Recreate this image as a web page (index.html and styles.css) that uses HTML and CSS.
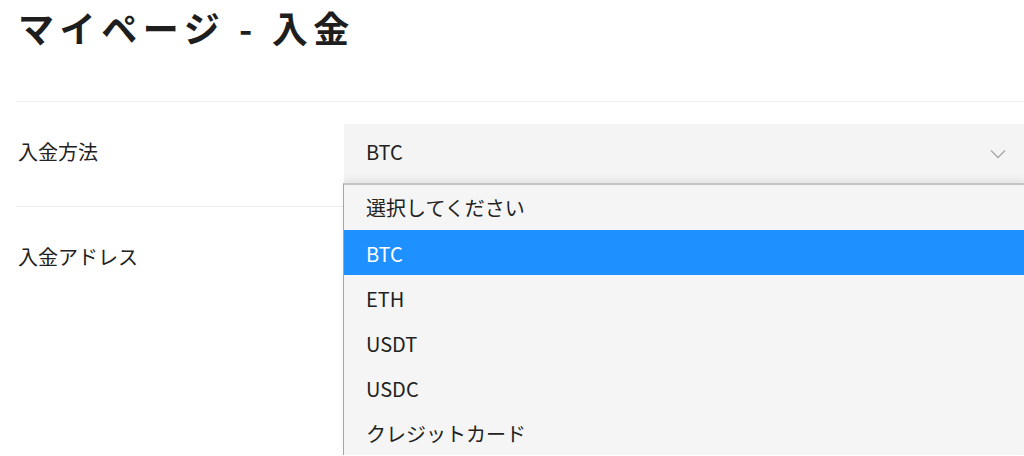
FILE: index.html
```html
<!DOCTYPE html>
<html lang="ja">
<head>
    <meta charset="UTF-8">
    <meta name="viewport" content="width=device-width, initial-scale=1.0">
    <title>マイページ - 入金</title>
    <link rel="stylesheet" href="styles.css">
</head>
<body>
    <div class="page">
        <h1>マイページ - 入金</h1>
        <div class="form">
            <div class="form-row">
                <div class="form-label">入金方法</div>
                <div class="form-field">
                    <div class="select">
                        <span>BTC</span>
                        <svg class="chevron" width="16" height="10" viewBox="0 0 16 10">
                            <polyline points="1,1.5 8,8.5 15,1.5" fill="none" stroke="#a8a8a8" stroke-width="1.3"/>
                        </svg>
                    </div>
                    <ul class="dropdown">
                        <li>選択してください</li>
                        <li class="selected">BTC</li>
                        <li>ETH</li>
                        <li>USDT</li>
                        <li>USDC</li>
                        <li>クレジットカード</li>
                    </ul>
                </div>
            </div>
            <div class="form-row">
                <div class="form-label">入金アドレス</div>
                <div class="form-field"></div>
            </div>
        </div>
    </div>
</body>
</html>
```

FILE: styles.css
```css
body {
    margin: 0;
    background-color: #ffffff;
    font-family: "Noto Sans CJK JP", "Noto Sans", sans-serif;
    color: #222222;
}
.page {
    height: 456px;
    padding-left: 16px;
    overflow: hidden;
}
h1 {
    margin: 0;
    padding: 5px 0 0 2px;
    height: 96px;
    font-size: 36px;
    line-height: 44px;
    font-weight: 700;
    letter-spacing: 5.6px;
    color: #1e1e1e;
    border-bottom: 1px solid #f0f0f0;
}
.form-row {
    display: flex;
    border-bottom: 1px solid #ececec;
}
.form-row:last-child {
    border-bottom: none;
}
.form-label {
    width: 326px;
    padding: 20px 0 24px 2px;
    font-size: 20px;
    line-height: 60px;
}
.form-field {
    flex: 1;
    position: relative;
    padding: 22px 0;
}
.select {
    display: flex;
    justify-content: space-between;
    align-items: center;
    height: 60px;
    padding: 0 18px 5px 22px;
    box-sizing: border-box;
    background-color: #f4f4f4;
    font-size: 20px;
}
.chevron {
    margin-top: 5px;
}
.dropdown {
    position: absolute;
    top: 81px;
    left: -1px;
    right: 0;
    margin: 0;
    padding: 0;
    list-style: none;
    background-color: #f5f5f5;
    border-top: 2px solid #c4c4c4;
    border-left: 1px solid #a6a6a6;
    box-shadow: 0 -4px 6px rgba(0, 0, 0, 0.06);
}
.dropdown li {
    height: 45px;
    line-height: 47px;
    padding-left: 22px;
    font-size: 20px;
    color: #222222;
}
.dropdown li:first-child {
    line-height: 45px;
}
.dropdown li.selected {
    background-color: #1e90ff;
    color: #ffffff;
}
```
